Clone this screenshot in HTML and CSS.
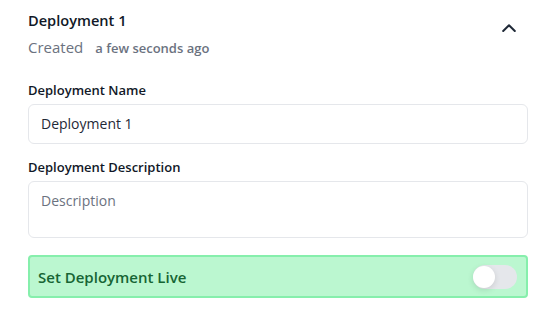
FILE: index.html
```html
<!DOCTYPE html>
<html lang="en">
<head>
<meta charset="utf-8">
<link rel="stylesheet" href="styles.css">
</head>
<body>
<div class="panel">
  <div class="header">
    <div class="header-text">
      <h2 class="title">Deployment 1</h2>
      <div class="meta"><span class="meta-label">Created</span><span class="meta-time">a few seconds ago</span></div>
    </div>
    <button class="collapse" aria-label="Collapse">
      <svg width="14" height="8" viewBox="0 0 14 8"><path d="M1.2 7 L7 1.2 L12.8 7" fill="none" stroke="#1f2937" stroke-width="2" stroke-linecap="round" stroke-linejoin="round"/></svg>
    </button>
  </div>
  <div class="field">
    <label class="label">Deployment Name</label>
    <div class="input">Deployment 1</div>
  </div>
  <div class="field">
    <label class="label">Deployment Description</label>
    <div class="textarea placeholder">Description</div>
  </div>
  <div class="live">
    <span class="live-label">Set Deployment Live</span>
    <span class="toggle"><span class="knob"></span></span>
  </div>
</div>
</body>
</html>
```

FILE: styles.css
```css
html, body {
  margin: 0;
  padding: 0;
  background: #ffffff;
}
body {
  font-family: "Open Sans", "Noto Sans", sans-serif;
  color: #111827;
}
.panel {
  width: 500px;
  padding: 9px 32px 0 28px;
}
.header {
  display: flex;
  justify-content: space-between;
  align-items: flex-start;
}
.title {
  margin: 0;
  font-size: 14.6px;
  font-weight: 600;
  line-height: 22px;
  color: #111827;
}
.meta {
  margin-top: 6px;
  display: flex;
  align-items: baseline;
  gap: 12px;
  color: #6b7280;
}
.meta-label {
  font-size: 15px;
  line-height: 20px;
}
.meta-time {
  font-size: 13px;
  font-weight: 600;
}
.collapse {
  margin: 15px 12px 0 0;
  padding: 0;
  border: 0;
  background: none;
  width: 14px;
  height: 8px;
  display: flex;
}
.label {
  display: block;
  font-size: 13px;
  font-weight: 600;
  line-height: 20px;
  color: #111827;
}
.header + .field {
  margin-top: 23px;
}
.field + .field {
  margin-top: 13px;
}
.input, .textarea {
  margin-top: 4px;
  box-sizing: border-box;
  width: 500px;
  border: 1px solid #e5e7eb;
  border-radius: 6px;
  padding: 0 12px;
  font-size: 14px;
  color: #1f2937;
}
.input {
  height: 40px;
  line-height: 38px;
}
.textarea {
  height: 57px;
  padding-top: 9px;
  line-height: 20px;
}
.placeholder {
  color: #6b7280;
}
.live {
  margin-top: 17px;
  box-sizing: border-box;
  width: 500px;
  height: 43px;
  background: #bbf7d0;
  border: 2px solid #86efac;
  border-radius: 4px;
  display: flex;
  align-items: center;
  justify-content: space-between;
  padding: 0 9px 0 8px;
}
.live-label {
  font-size: 15px;
  font-weight: 600;
  color: #166534;
}
.toggle {
  position: relative;
  width: 44px;
  height: 24px;
  border-radius: 12px;
  background: #e5e7eb;
  display: block;
}
.knob {
  position: absolute;
  left: 0;
  top: 1px;
  width: 22px;
  height: 22px;
  border-radius: 50%;
  background: #ffffff;
  box-shadow: 0 2px 6px rgba(0,0,0,0.12);
}
```
